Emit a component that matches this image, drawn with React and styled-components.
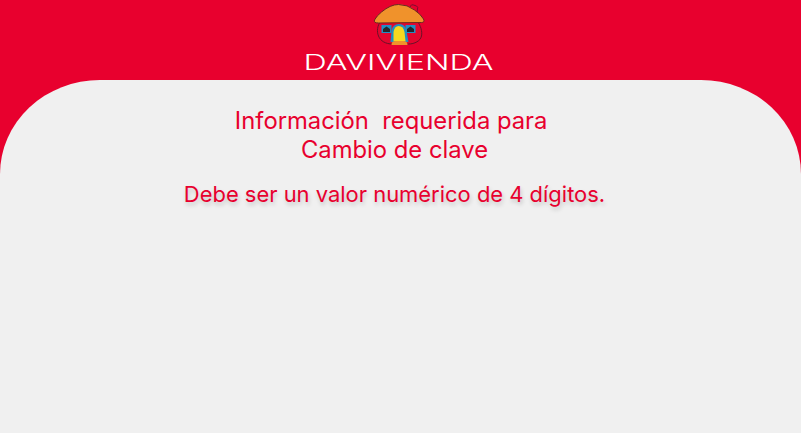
import React from 'react';
import styled, { createGlobalStyle } from 'styled-components';

const GlobalStyle = createGlobalStyle`
  html, body {
    margin: 0;
    padding: 0;
    background: #e8002e;
  }
  body {
    font-family: Inter, "Liberation Sans", sans-serif;
  }
`;

const Page = styled.div`
  width: 801px;
  height: 433px;
  display: flex;
  flex-direction: column;
  overflow: hidden;
  background: #e8002e;
`;

const Header = styled.header`
  height: 80px;
  flex: none;
  display: flex;
  flex-direction: column;
  align-items: center;
`;

const Panel = styled.main`
  flex: 1;
  display: flex;
  flex-direction: column;
  align-items: center;
  padding: 26px 12px 0 0;
  background: #f0f0f0;
  border-radius: 100px 100px 0 0 / 94px 94px 0 0;
`;

const Title = styled.h1`
  margin: 0;
  font-size: 23.8px;
  line-height: 29px;
  font-weight: 400;
  color: #e8002e;
  text-align: center;
  white-space: pre-wrap;
`;

const Message = styled.p`
  margin: 17px 0 0;
  font-size: 21.95px;
  line-height: 27px;
  font-weight: 400;
  color: #e8002e;
  text-align: center;
  text-shadow: 1px 3px 4px rgba(0, 0, 0, 0.18);
`;

// viewBox follows the page x so the points read the same as the screenshot
const Logo = () => (
  <svg width="200" height="78" viewBox="300.5 0 200 78">
    {/* chimney */}
    <path d="M408 12 L410 6 Q411 4 413 5 L416 6 Q418 7 417 9 L416 15" fill="#e8002e" stroke="#7a1030" strokeWidth="1" />
    {/* house body */}
    <path
      d="M380 21 C377 26 376 31 378 36 C380 41 385 44 392 44 L408 44 C414 44 420 41 421 36 C422 31 420 26 417 21 Z"
      fill="#e3062f"
      stroke="#6a1228"
      strokeWidth="1"
    />
    {/* door frame */}
    <path d="M390 42 L391 31 Q392 24 398.500 24 Q405 24 406 31 L408 42 Z" fill="#1f8fc4" />
    {/* door */}
    <path d="M393 41 L393 32 Q394 26 398 26 Q403 26 404 32 L405 41 Z" fill="#f7d91f" />
    {/* step */}
    <path d="M391 45 Q391 41 395 41 L403 41 Q407 41 407 45 Z" fill="#f0922b" />
    {/* windows */}
    <rect x="381" y="25" width="10" height="8" fill="#1f8fc4" />
    <path d="M382.500 32 L382.500 29 L386 26.500 L389.500 29 L389.500 32 Z" fill="#23262b" />
    <rect x="405" y="25" width="10" height="8" fill="#1f8fc4" />
    <path d="M406.500 32 L406.500 29 L410 26.500 L413.500 29 L413.500 32 Z" fill="#23262b" />
    {/* roof */}
    <path
      d="M374 20 Q376 16 381 12 Q390 4.500 398 4.500 Q407 4.500 414 10 Q420 14 423 19 Q424.500 22.500 421 22.500 L378 23 Q373 23 374 20 Z"
      fill="#f0922b"
      stroke="#6a2a20"
      strokeWidth="1"
    />
    {/* wordmark */}
    <text
      x="303"
      y="70"
      textLength="190"
      lengthAdjust="spacingAndGlyphs"
      fontFamily="Inter, sans-serif"
      fontSize="21"
      fontWeight="300"
      fill="#ffffff"
    >
      DAVIVIENDA
    </text>
  </svg>
);

const App = () => (
  <>
    <GlobalStyle />
    <Page>
      <Header>
        <Logo />
      </Header>
      <Panel>
        <Title>
          {'Información  requerida para '}
          <br />
          Cambio de clave
        </Title>
        <Message>Debe ser un valor numérico de 4 dígitos.</Message>
      </Panel>
    </Page>
  </>
);

export default App;
